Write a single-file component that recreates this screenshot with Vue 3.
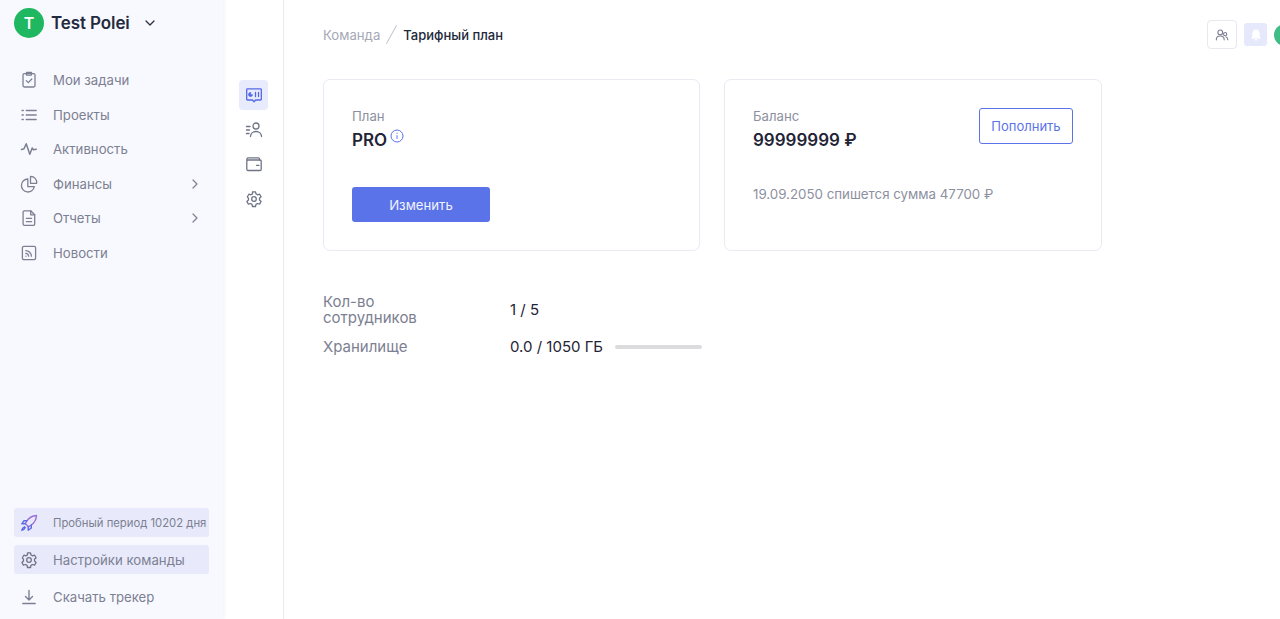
<script setup>
const navItems = [
  { label: 'Мои задачи', icon: 'task' },
  { label: 'Проекты', icon: 'list' },
  { label: 'Активность', icon: 'pulse' },
  { label: 'Финансы', icon: 'pie', arrow: true },
  { label: 'Отчеты', icon: 'doc', arrow: true },
  { label: 'Новости', icon: 'rss' },
]
</script>

<template>
  <div class="app">
    <aside class="sidebar">
      <div class="team">
        <span class="avatar">T</span>
        <span class="team-name">Test Polei</span>
        <svg class="team-chevron" width="12" height="12" viewBox="0 0 12 12" fill="none" stroke="#2b3040" stroke-width="1.3" stroke-linecap="round" stroke-linejoin="round"><path d="M2 4l4 4 4-4" /></svg>
      </div>
      <nav class="nav">
        <a v-for="item in navItems" :key="item.label" class="nav-row">
          <svg class="nav-icon" width="18" height="18" viewBox="0 0 18 18" fill="none" stroke="#7c8092" stroke-width="1.3" stroke-linecap="round" stroke-linejoin="round">
            <template v-if="item.icon === 'task'">
              <rect x="3" y="2.600" width="12" height="13.400" rx="1.400" />
              <path d="M6.500 1.500h5v2.600h-5z" />
              <path d="M6.300 9.600l2 2 3.500-3.600" />
            </template>
            <template v-else-if="item.icon === 'list'">
              <path d="M6.200 4.500h10M6.200 9h10M6.200 13.500h10" />
              <path d="M2 4.500h1.300M2 9h1.300M2 13.500h1.300" />
            </template>
            <path v-else-if="item.icon === 'pulse'" stroke-width="1.500" d="M1.500 9.500l2.500-.8 2.200-5 3.600 10.600 2.400-6.300 1.300 1.700 2.800-.4" />
            <template v-else-if="item.icon === 'pie'">
              <path d="M7.800 4a6.500 6.500 0 1 0 6.500 7.700H7.800z" />
              <path d="M10.500 1.400a6 6 0 0 1 6.100 6.900h-6.100z" />
            </template>
            <template v-else-if="item.icon === 'doc'">
              <path d="M4.400 1.800h6.300l4 4V15a1.300 1.300 0 0 1-1.300 1.300h-9A1.300 1.300 0 0 1 3.100 15V3.100a1.300 1.300 0 0 1 1.300-1.300z" />
              <path d="M10.700 2v3.800h4M6.400 9.400h5.200M6.400 12.600h5.200" />
            </template>
            <template v-else>
              <rect x="2.400" y="2.400" width="13.200" height="13.200" rx="1.400" />
              <path d="M5.800 6.600a5.800 5.800 0 0 1 5.600 5.600M5.800 9.400a3 3 0 0 1 2.800 2.800M5.800 12.200h.1" />
            </template>
          </svg>
          <span class="nav-label">{{ item.label }}</span>
          <svg v-if="item.arrow" class="nav-arrow" width="10" height="12" viewBox="0 0 10 12" fill="none" stroke="#7c8092" stroke-width="1.200" stroke-linecap="round" stroke-linejoin="round"><path d="M3 2l4 4-4 4" /></svg>
        </a>
      </nav>
      <div class="side-bottom">
        <div class="side-row highlighted">
          <svg width="18" height="18" viewBox="0 0 18 18" fill="none" stroke-width="1.400" stroke-linecap="round" stroke-linejoin="round">
            <path d="M16.500 1.500c-4.500.3-7.200 2-9.500 5.200L5.200 9.500l3.300 3.300 2.800-1.800c3.200-2.300 4.900-5 5.200-9.500z" stroke="#9b6fd8" />
            <path d="M7 6.700H4L1.800 9.800h3.400M11.300 11v3L8.200 16.200v-3.400" stroke="#5a6ae6" />
            <path d="M4.500 12.800c-1.500.5-2.300 1.700-2.700 3.400 1.700-.4 2.900-1.200 3.400-2.700" stroke="#5a6ae6" />
          </svg>
          <span class="trial-text">Пробный период 10202 дня</span>
        </div>
        <div class="side-row highlighted">
          <svg width="18" height="18" viewBox="0 0 18 18" fill="none" stroke="#6f7386" stroke-width="1.300" stroke-linejoin="round">
            <path d="M7.500 1.800h3l.5 2.100 1.500.9 2.100-.6 1.500 2.600-1.600 1.500v1.700l1.600 1.500-1.500 2.600-2.100-.6-1.500.9-.5 2.100h-3l-.5-2.100-1.500-.9-2.100.6-1.500-2.600 1.600-1.500V8.300L2.400 6.800l1.500-2.600 2.100.6 1.500-.9z" />
            <circle cx="9" cy="9" r="2.300" />
          </svg>
          <span class="side-label">Настройки команды</span>
        </div>
        <div class="side-row">
          <svg width="18" height="18" viewBox="0 0 18 18" fill="none" stroke="#7c8092" stroke-width="1.400" stroke-linecap="round" stroke-linejoin="round">
            <path d="M9 2.500v9M5.500 8.500L9 12l3.500-3.500M2.800 15.500h12.400" />
          </svg>
          <span class="side-label">Скачать трекер</span>
        </div>
      </div>
    </aside>

    <div class="subnav">
      <span class="sub-icon active">
        <svg width="18" height="18" viewBox="0 0 18 18" fill="none" stroke="#5468e7" stroke-width="1.300" stroke-linecap="round" stroke-linejoin="round">
          <path d="M2.500 2.800h13a.8.8 0 0 1 .8.800v9.600a.8.8 0 0 1-.8.800h-5L9 15.800l-1.500-1.800h-5a.8.8 0 0 1-.8-.8V3.600a.8.8 0 0 1 .8-.8z" />
          <path d="M5.500 6.500a2 2 0 1 0 2 2.200h-2z" fill="#5468e7" stroke-width="0.800" />
          <path d="M10.500 6.500v4M13.500 6.500v4" />
        </svg>
      </span>
      <span class="sub-icon">
        <svg width="18" height="18" viewBox="0 0 18 18" fill="none" stroke="#6f7386" stroke-width="1.300" stroke-linecap="round" stroke-linejoin="round">
          <circle cx="11" cy="5" r="3" />
          <path d="M5.500 15.500c0-3 2.400-5 5.500-5s5.500 2 5.500 5" />
          <path d="M1.500 5.500h3.500M1.500 9h3M1.500 12.500h2.500" />
        </svg>
      </span>
      <span class="sub-icon">
        <svg width="18" height="18" viewBox="0 0 18 18" fill="none" stroke="#6f7386" stroke-width="1.300" stroke-linecap="round" stroke-linejoin="round">
          <path d="M2 5V3.800A1 1 0 0 1 3 2.800h10.500a1 1 0 0 1 1 1V5" />
          <rect x="1.800" y="5" width="14.400" height="10.500" rx="1.200" />
          <path d="M11.500 10.300h2.500" />
        </svg>
      </span>
      <span class="sub-icon">
        <svg width="18" height="18" viewBox="0 0 18 18" fill="none" stroke="#6f7386" stroke-width="1.300" stroke-linejoin="round">
          <path d="M7.500 1.800h3l.5 2.100 1.500.9 2.100-.6 1.500 2.600-1.600 1.500v1.700l1.600 1.500-1.500 2.600-2.100-.6-1.500.9-.5 2.100h-3l-.5-2.100-1.500-.9-2.100.6-1.500-2.600 1.600-1.500V8.300L2.400 6.800l1.500-2.600 2.100.6 1.500-.9z" />
          <circle cx="9" cy="9" r="2.300" />
        </svg>
      </span>
    </div>

    <main class="main">
      <header class="topbar">
        <div class="crumbs">
          <span class="crumb-parent">Команда</span>
          <span class="crumb-sep"></span>
          <span class="crumb-current">Тарифный план</span>
        </div>
        <div class="actions">
          <span class="users-btn">
            <svg width="14" height="14" viewBox="0 0 16 16" fill="none" stroke="#7c8092" stroke-width="1.300" stroke-linecap="round" stroke-linejoin="round">
              <circle cx="6" cy="5" r="2.700" />
              <path d="M1.500 13.500c0-2.800 2-4.300 4.500-4.300s4.500 1.500 4.500 4.300" />
              <circle cx="11.600" cy="7" r="1.800" />
              <path d="M12.300 10c1.400.3 2.300 1.500 2.300 3.300" />
            </svg>
          </span>
          <span class="bell">
            <svg width="14" height="14" viewBox="0 0 14 14" fill="#fff"><path d="M7 1.500c2.400 0 3.700 1.700 3.700 4v3.300l1.300 1.700H2l1.300-1.700V5.500c0-2.300 1.300-4 3.700-4z" /><path d="M5.600 11.300h2.800a1.400 1.400 0 0 1-2.800 0z" /></svg>
          </span>
          <span class="user-dot"></span>
        </div>
      </header>

      <section class="cards">
        <div class="card plan">
          <div class="card-label">План</div>
          <div class="plan-line">
            <span class="card-value">PRO</span>
            <svg class="info" width="14" height="14" viewBox="0 0 14 14" fill="none" stroke="#5b73e8" stroke-width="1"><circle cx="7" cy="7" r="6" /><path d="M7 6.200v3.600M7 3.800v1" /></svg>
          </div>
          <button class="btn-primary" type="button">Изменить</button>
        </div>
        <div class="card balance">
          <div class="balance-top">
            <div>
              <div class="card-label">Баланс</div>
              <div class="card-value">99999999 ₽</div>
            </div>
            <button class="btn-outline" type="button">Пополнить</button>
          </div>
          <div class="charge">19.09.2050 спишется сумма 47700 ₽</div>
        </div>
      </section>

      <section class="stats">
        <div class="stat-row">
          <div class="stat-name">Кол-во сотрудников</div>
          <div class="stat-value">1 / 5</div>
        </div>
        <div class="stat-row">
          <div class="stat-name">Хранилище</div>
          <div class="stat-value">0.0 / 1050 ГБ</div>
          <div class="bar"></div>
        </div>
      </section>
    </main>
  </div>
</template>

<style>
html, body { margin: 0; background: #fff; overflow: hidden; }
</style>

<style scoped>
.app {
  display: flex;
  width: 1280px;
  height: 619px;
  overflow: hidden;
  font-family: Inter, "Noto Sans", sans-serif;
  background: #fff;
}
.sidebar {
  width: 223px;
  flex: none;
  box-sizing: border-box;
  display: flex;
  flex-direction: column;
  background: #f8f9fe;
  box-shadow: 1px 0 3px rgba(60, 70, 120, 0.08);
  padding: 8px 14px 8px;
}
.team { display: flex; align-items: center; height: 30px; }
.avatar {
  width: 30px;
  height: 30px;
  border-radius: 50%;
  background: #1fb75f;
  color: #fff;
  font-size: 16px;
  font-weight: 600;
  display: flex;
  align-items: center;
  justify-content: center;
}
.team-name {
  margin-left: 7px;
  font-size: 17px;
  font-weight: 600;
  letter-spacing: -0.1px;
  color: #242a3d;
}
.team-chevron { margin-left: 14px; }
.nav { margin-top: 24.800px; display: flex; flex-direction: column; }
.nav-row {
  height: 34.600px;
  display: flex;
  align-items: center;
  padding-left: 6px;
  font-size: 13.200px;
  color: #7c8092;
}
.nav-icon { flex: none; }
.nav-label { margin-left: 15px; }
.nav-arrow { margin-left: auto; margin-right: 9px; }
.side-bottom { margin-top: auto; display: flex; flex-direction: column; gap: 8px; }
.side-row {
  height: 29px;
  border-radius: 3px;
  display: flex;
  align-items: center;
  padding-left: 6px;
  color: #7c8092;
}
.highlighted { background: #e8eafb; }
.trial-text { margin-left: 15px; font-size: 11.300px; white-space: nowrap; color: #7c8092; }
.side-label { margin-left: 15px; font-size: 13.200px; }

.subnav {
  width: 60px;
  margin-left: 1px;
  flex: none;
  box-sizing: border-box;
  border-right: 1px solid #e9eaf0;
  padding: 80px 0 0 15px;
  display: flex;
  flex-direction: column;
  gap: 4.600px;
}
.sub-icon {
  width: 29px;
  height: 30px;
  border-radius: 4px;
  display: flex;
  align-items: center;
  justify-content: center;
}
.sub-icon.active { background: #e8ebfb; }

.main { flex: 1; min-width: 0; padding-left: 39px; }
.topbar {
  height: 79px;
  box-sizing: border-box;
  display: flex;
  justify-content: space-between;
  padding-top: 20px;
}
.crumbs { display: flex; align-items: center; height: 29px; font-size: 13.200px; }
.crumb-parent { color: #a5a8b5; }
.crumb-sep {
  width: 1px;
  height: 21px;
  margin: 0 11px 0 11px;
  background: #c5c7d0;
  transform: rotate(29deg);
}
.crumb-current { color: #22283a; font-weight: 500; font-size: 13px; }
.actions { display: flex; align-items: center; gap: 7px; height: 29px; margin-right: -16px; }
.users-btn {
  width: 28px;
  height: 27px;
  border: 1px solid #e8e9ef;
  border-radius: 4px;
  display: flex;
  align-items: center;
  justify-content: center;
}
.bell {
  width: 23px;
  height: 23px;
  border-radius: 3px;
  background: #e6e8fb;
  display: flex;
  align-items: center;
  justify-content: center;
}
.user-dot { width: 22px; height: 22px; border-radius: 50%; background: #3fbd85; }

.cards { display: flex; gap: 24px; }
.card {
  height: 172px;
  box-sizing: border-box;
  border: 1px solid #e8eaf4;
  border-radius: 7px;
  padding: 28px 28px 0;
}
.plan { width: 377px; }
.balance { width: 378px; }
.card-label { font-size: 13.200px; line-height: 16px; color: #8d90a0; }
.plan-line { display: flex; align-items: flex-start; height: 30px; margin-top: 4px; }
.card-value {
  font-size: 17px;
  line-height: 24px;
  font-weight: 600;
  color: #1f2436;
}
.info { margin: 1px 0 0 3px; }
.btn-primary {
  display: block;
  width: 138px;
  height: 35px;
  margin-top: 29px;
  border: 0;
  border-radius: 3px;
  background: #5b73e8;
  color: #f2f4ff;
  font: 400 13.200px Inter, sans-serif;
}
.balance-top { display: flex; justify-content: space-between; align-items: flex-start; }
.balance .card-value { margin-top: 4px; }
.btn-outline {
  width: 94px;
  height: 36px;
  box-sizing: border-box;
  border: 1px solid #5b73e8;
  border-radius: 3px;
  background: #fff;
  color: #5b73e8;
  font: 400 13px Inter, sans-serif;
}
.charge { margin-top: 34px; font-size: 13.300px; line-height: 16px; color: #8d90a0; }

.stats { margin-top: 43px; display: flex; flex-direction: column; gap: 13px; }
.stat-row { display: flex; align-items: center; }
.stat-name {
  width: 110px;
  font-size: 15px;
  line-height: 16px;
  color: #7c8092;
  margin-right: 77px;
}
.stat-value { font-size: 15px; line-height: 16px; font-weight: 400; color: #1f2436; }
.bar { width: 87px; height: 4px; margin-left: 12px; border-radius: 2px; background: #dcdcdf; }
</style>
